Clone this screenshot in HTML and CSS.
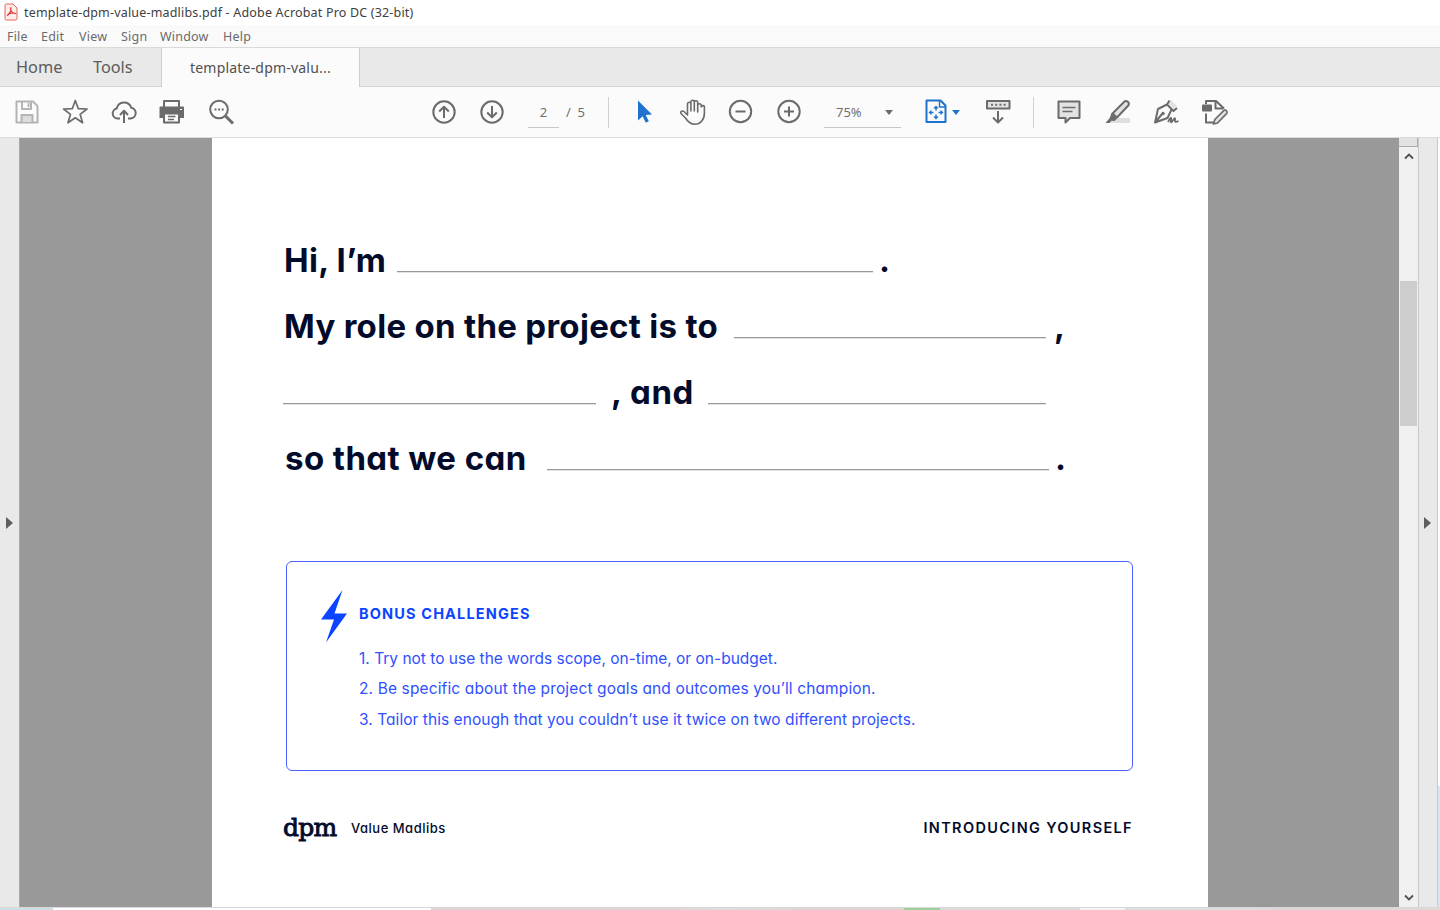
FILE: index.html
```html
<!doctype html>
<html lang="en">
    <head>
        <meta charset="utf-8" />
        <meta name="viewport" content="width=device-width, initial-scale=1" />
        <title>template-dpm-value-madlibs.pdf - Adobe Acrobat Pro DC (32-bit)</title>
        <link rel="stylesheet" href="styles.css">
    </head>
    <body>
        <header class="titlebar">
            <svg class="app-icon" width="14" height="18" viewBox="0 0 14 18">
                <path d="M2.500 1h6.500L13 5v10.500a1.500 1.500 0 0 1-1.500 1.500h-9A1.500 1.500 0 0 1 1 15.500v-13A1.500 1.500 0 0 1 2.500 1z" fill="#fdecea" stroke="#e5645f" />
                <path d="M3 12.500c2.500-1 4.300-4.800 3.800-7.500-1 2 1.500 5.500 4.200 5.400-1.800-1-5.800 0-8 2.100z" fill="none" stroke="#e02f2a" stroke-width="1.200" />
            </svg>
            <span class="title">template-dpm-value-madlibs.pdf - Adobe Acrobat Pro DC (32-bit)</span>
        </header>

        <nav class="menubar">
            <span class="file">File</span>
            <span class="edit">Edit</span>
            <span class="view">View</span>
            <span class="sign">Sign</span>
            <span class="window">Window</span>
            <span class="help">Help</span>
        </nav>

        <div class="tabs">
            <div class="tab home">Home</div>
            <div class="tab tools">Tools</div>
            <div class="tab active">template-dpm-valu...</div>
        </div>

        <div class="toolbar">
            <div class="group group-file">
                <svg class="icon faded" viewBox="0 0 28 28">
                    <path d="M3.500 3.500h16.500l4.500 4.500v16.500h-21z" />
                    <path d="M9 4v7h9V4" />
                    <path d="M14.500 5h2v4h-2z" class="solid" />
                    <path d="M8.500 24v-7h11v7" fill="#dcdcdc" />
                </svg>
                <svg class="icon" viewBox="0 0 28 28">
                    <path d="M14.300 2.500l3 8.200 8.700.3-6.900 5.300 2.500 8.500-7.300-5-7.300 5 2.500-8.500L2.600 11l8.700-.3z" stroke-width="1.700" />
                </svg>
                <svg class="icon" viewBox="0 0 28 28">
                    <path d="M10 20.500H7.500a5 5 0 0 1-.8-9.900 7.500 7.500 0 0 1 14.500-.8 5.400 5.400 0 0 1-.4 10.700H18" />
                    <path d="M14 25V13m-4 4l4-4.200 4 4.200" />
                </svg>
                <svg class="icon" viewBox="0 0 28 28">
                    <path d="M6 9V3h15v6" />
                    <path d="M2.500 8.500h22.500a1 1 0 0 1 1 1V20h-4.500v-4h-16v4h-4V9.500a1 1 0 0 1 1-1z" class="solid" />
                    <path d="M6 15.500h15v9H6z" />
                    <path d="M10 18.500h7.500M10 21.500h6" stroke-width="1.400" />
                    <path d="M22 11.500h2" stroke="#fff" stroke-width="1.200" />
                </svg>
                <svg class="icon" viewBox="0 0 28 28">
                    <circle cx="12" cy="11.500" r="8.800" />
                    <path d="M18.500 18l7.500 7.500" stroke-width="3" />
                    <path d="M7.500 10.500h2v2h-2zM11.100 10.500h2v2h-2zM14.700 10.500h2v2h-2z" class="solid" />
                </svg>
            </div>

            <div class="group group-pages">
                <svg class="icon" viewBox="0 0 28 28">
                    <circle cx="14" cy="14" r="10.700" />
                    <path d="M14 20V9m-4.800 4.500L14 8.700l4.800 4.800" />
                </svg>
                <svg class="icon" viewBox="0 0 28 28">
                    <circle cx="14" cy="14" r="10.700" />
                    <path d="M14 8v11m-4.800-4.500l4.800 4.800 4.800-4.800" />
                </svg>
            </div>
            <div class="page-number">2</div>
            <div class="page-total">/&nbsp; 5</div>

            <div class="group group-view">
                <svg class="icon" viewBox="0 0 28 28">
                    <path d="M7 2.500v20l4.600-4.300 3.200 6.600 3-1.500-3.100-6.300 6.300-.4z" fill="#1f73cc" stroke="none" />
                </svg>
                <svg class="icon" viewBox="0 0 28 28">
                    <path d="M8.500 14.500V6a1.700 1.700 0 0 1 3.400 0v7V4a1.700 1.700 0 0 1 3.400 0v9V4.500a1.700 1.700 0 0 1 3.400 0V14 7.500a1.700 1.700 0 0 1 3.500 0V9a1.600 1.600 0 0 1 3.200.5V15c0 7-4 11.200-9.700 11.200-5 0-7-2.500-9.200-6.200L2 15.500c-1-2.500 1.500-3.200 3.500-1.500l3 3z" stroke-width="1.600" />
                </svg>
                <svg class="icon" viewBox="0 0 28 28">
                    <circle cx="13.500" cy="13.500" r="10.700" />
                    <path d="M8.500 13.500h10" />
                </svg>
                <svg class="icon" viewBox="0 0 28 28">
                    <circle cx="14" cy="13.500" r="10.700" />
                    <path d="M9 13.500h10M14 8.500v10" />
                </svg>
            </div>
            <div class="zoom">75% <i class="caret"></i></div>

            <div class="group group-fit">
                <svg class="icon blue" viewBox="0 0 28 28">
                    <path d="M4.500 2.500h14l5 5V24h-19z" />
                    <path d="M17.500 3v6h6" stroke-width="1.500" />
                    <path d="M14 7.500l-2.800 3h5.600zM14 21.500l-2.800-3h5.600zM6.500 14.500l3-2.800v5.600zM21.500 14.500l-3-2.800v5.600z" class="solid" />
                    <path d="M14 10v2.500m0 4V19M9 14.500h2.500m5 0H19" stroke-width="1.500" />
                </svg>
                <i class="caret blue"></i>
                <svg class="icon scroll" viewBox="0 0 28 28">
                    <path d="M3 3h22.500v7.500H3z" fill="#e4e4e4" />
                    <path d="M7 6.700h15" stroke-dasharray="2 2.200" />
                    <path d="M14 13v11m-5-4.500l5 5 5-5" />
                </svg>
            </div>

            <div class="group group-comment">
                <svg class="icon" viewBox="0 0 28 28">
                    <path d="M3.500 3.500h21v16.500H15l-4.500 4.500V20h-7z" fill="#e2e2e2" />
                    <path d="M7.500 9.500h13M7.500 13.500h10" stroke-width="1.500" />
                </svg>
                <svg class="icon" viewBox="0 0 28 28">
                    <path d="M12 20h14v5H5z" fill="#dedede" stroke="none" />
                    <path d="M8.500 15.500L20.500 3.500c2-1.600 5.500 1.300 4 3.800L13 19.500z" fill="#e2e2e2" />
                    <path d="M7.500 15l5.500 5.500-2.500 2.500-3-.3L5.500 25H1.500l4.200-5z" class="solid" />
                </svg>
                <svg class="icon" viewBox="0 0 28 28">
                    <path d="M15.500 5l3.500-3 6 6-3 3z" fill="#e2e2e2" stroke="none" />
                    <path d="M17.500 2.500l-2.500 4 6.500 6.500L25 10M15 6.500L6 11 3 24.500 15.500 20l4-8.500M3.500 24l6.500-8" />
                    <circle cx="11" cy="15.500" r="1.700" class="solid" />
                    <path d="M16 24c2-4 4-6 3-2s1 2 2.500-.5 2-1 1.500 1 1.500 1.500 3.500.5" stroke-width="1.700" />
                </svg>
                <svg class="icon" viewBox="0 0 28 28">
                    <path d="M5 6V3h10l8 7.500M14.500 3v7.500H22M5 15.500v9h7" />
                    <rect x="1" y="6.500" width="10" height="7" rx="1" class="solid" />
                    <path d="M12.500 26l1.300-4.500L23 12.300c1.500-1 4 1.200 2.800 3L16.500 25z" fill="#e2e2e2" stroke-width="1.700" />
                </svg>
            </div>
        </div>

        <main class="workspace">
            <div class="rail left"><i class="arrow"></i></div>
            <div class="canvas">
                <article class="page">
                    <section class="madlibs">
                        <p><span class="hi">Hi, I’m</span><i class="blank b1"></i><span class="dot">.</span></p>
                        <p><span class="role">My role on the project is to</span><i class="blank b2"></i><span class="comma">,</span></p>
                        <p><i class="blank b3"></i><span class="and">, and</span><i class="blank b4"></i></p>
                        <p><span class="so">so that we can</span><i class="blank b5"></i><span class="dot">.</span></p>
                    </section>

                    <section class="bonus">
                        <svg class="bolt" width="26" height="54" viewBox="0 0 26 54">
                            <path d="M21.500 0L0 29.500h13L5 52.500 26 23.500H13.500z" fill="#0b45ff" />
                        </svg>
                        <div>
                            <h2>BONUS CHALLENGES</h2>
                            <ol>
                                <li class="scope">1. Try not to use the words scope, on-time, or on-budget.</li>
                                <li class="goals">2. Be specific about the project goals and outcomes you’ll champion.</li>
                                <li class="tailor">3. Tailor this enough that you couldn’t use it twice on two different projects.</li>
                            </ol>
                        </div>
                    </section>

                    <footer class="page-footer">
                        <span class="logo">dpm</span>
                        <span class="doc-name">Value Madlibs</span>
                        <span class="section-name">INTRODUCING YOURSELF</span>
                    </footer>
                </article>
            </div>
            <div class="scrollbar">
                <div class="splitter"></div>
                <svg width="10" height="7" viewBox="0 0 10 7"><path d="M1 5.500l4-4 4 4" /></svg>
                <div class="thumb"></div>
                <svg class="down" width="10" height="7" viewBox="0 0 10 7"><path d="M1 1.500l4 4 4-4" /></svg>
            </div>
            <div class="rail right"><i class="arrow"></i></div>
            <div class="edge"></div>
        </main>
        <div class="desktop"></div>
    </body>
</html>
```

FILE: styles.css
```css
* {
    box-sizing: border-box;
}

body {
    margin: 0;
    height: 910px;
    overflow: hidden;
    display: flex;
    flex-direction: column;
    font-family: "Noto Sans", "Open Sans", sans-serif;
    color: #5c5c5c;
    background: #fff;
}

.titlebar {
    height: 25px;
    display: flex;
    align-items: center;
    padding-left: 4px;
    color: #404040;
    font-size: 12.500px;
    letter-spacing: 0.180px;
}

.app-icon {
    margin-top: -2px;
}

.title {
    margin-left: 6px;
    white-space: nowrap;
}

.menubar {
    height: 23px;
    display: flex;
    align-items: center;
    padding-left: 7px;
    background: #fafafa;
    border-bottom: 1px solid #dadada;
    font-size: 12.500px;
    letter-spacing: 0.200px;
    color: #6a6a6a;
}

.file { width: 34px; }
.edit { width: 38px; }
.view { width: 42px; }
.sign { width: 39px; }
.window { width: 63px; }

.tabs {
    height: 39px;
    display: flex;
    background: #e9e9e9;
    border-bottom: 1px solid #d2d2d2;
    font-size: 16.300px;
    line-height: 38px;
}

.home {
    width: 93px;
    padding-left: 16px;
}

.tools {
    width: 68px;
}

.active {
    width: 199px;
    height: 39px;
    padding-left: 28px;
    background: #fbfbfb;
    border-left: 1px solid #cfcfcf;
    border-right: 1px solid #cfcfcf;
    font-size: 14px;
    letter-spacing: 0.200px;
    line-height: 40px;
    color: #505050;
}

.toolbar {
    height: 51px;
    display: flex;
    align-items: center;
    background: #fbfbfb;
    border-bottom: 1px solid #dcdcdc;
    font-size: 13px;
    color: #707070;
}

.group {
    display: flex;
    align-items: center;
    gap: 20.400px;
}

.icon {
    width: 28px;
    height: 28px;
    fill: none;
    stroke: #6b6b6b;
    stroke-width: 2;
    stroke-linejoin: round;
}

.icon .solid {
    fill: #6b6b6b;
    stroke: none;
}

.icon.faded {
    stroke: #b4b4b4;
}

.icon.faded .solid {
    fill: #b4b4b4;
}

.icon.blue {
    stroke: #1f73cc;
}

.icon.blue .solid {
    fill: #1f73cc;
}

.group-file {
    margin-left: 13px;
}

.group-pages {
    margin-left: 195px;
}

.page-number {
    width: 31px;
    height: 31px;
    margin-left: 22px;
    border-bottom: 1px solid #c8c8c8;
    text-align: center;
    line-height: 31px;
}

.page-total {
    width: 50px;
    height: 31px;
    padding-left: 7px;
    border-right: 1px solid #d0d0d0;
    line-height: 31px;
}

.group-view {
    margin-left: 22px;
    gap: 20px;
}

.zoom {
    width: 77px;
    height: 31px;
    margin-left: 21px;
    padding: 0 8px 0 12px;
    display: flex;
    align-items: center;
    justify-content: space-between;
    border-bottom: 1px solid #c8c8c8;
}

.caret {
    margin-top: 1px;
    border: 4px solid transparent;
    border-top: 5px solid #6b6b6b;
    border-bottom: 0;
}

.caret.blue {
    margin-left: 2px;
    border-top-color: #1f73cc;
}

.group-fit {
    margin-left: 21px;
    width: 112px;
    height: 31px;
    gap: 0;
    border-right: 1px solid #d0d0d0;
}

.scroll {
    margin-left: 24px;
}

.group-comment {
    margin-left: 21px;
    gap: 20.600px;
}

.workspace {
    height: 769px;
    display: flex;
}

.rail {
    width: 20px;
    display: flex;
    align-items: center;
    background: #e9e9e9;
    border-right: 1px solid #c9c9c9;
}

.rail.left {
    padding-left: 6px;
    border-right-color: #a8a8a8;
}

.rail.right {
    width: 19px;
    padding-left: 5px;
}

.arrow {
    border: 6px solid transparent;
    border-left: 7px solid #5e5e5e;
    border-right: 0;
}

.canvas {
    width: 1379px;
    padding-left: 192px;
    background: #999;
}

.page {
    width: 996px;
    height: 769px;
    padding: 89px 74px 0 71px;
    background: #fff;
    color: #030b2b;
    font-family: Inter, sans-serif;
    font-feature-settings: "cv11";
}

.madlibs {
    height: 263px;
    font-size: 33px;
    font-weight: 650;
    letter-spacing: 0.300px;
}

.madlibs p {
    height: 66px;
    margin: 0;
    display: flex;
    align-items: baseline;
    line-height: 66px;
    white-space: nowrap;
}

.blank {
    height: 1px;
    background: #999;
    box-shadow: 0 1px #e2e2e2;
}

.hi { width: 114px; padding-left: 1px; }
.b1 { width: 476px; }
.role { width: 451px; padding-left: 1px; }
.b2 { width: 312px; }
.b3 { width: 313px; }
.and { width: 112px; padding-left: 15px; letter-spacing: 0.600px; }
.b4 { width: 338px; }
.so { width: 264px; padding-left: 2px; letter-spacing: 0.420px; }
.b5 { width: 502px; }

.dot {
    padding-left: 6px;
}

.comma {
    padding-left: 8px;
}

.bonus {
    width: 847px;
    height: 210px;
    margin: 71px 0 0 3px;
    padding: 28px 0 0 34px;
    display: flex;
    align-items: flex-start;
    border: 1px solid #4a62ff;
    border-radius: 6px;
    color: #2f50ff;
}

.bonus > div {
    margin-left: 12px;
}

h2 {
    margin: 13px 0 20px;
    color: #0b45ff;
    font-size: 14.500px;
    font-weight: 650;
    line-height: 21px;
    letter-spacing: 1.150px;
}

ol {
    margin: 0;
    padding: 0;
    list-style: none;
    font-size: 15.500px;
    line-height: 30.300px;
    white-space: nowrap;
}

.goals {
    letter-spacing: 0.130px;
}

.tailor {
    letter-spacing: 0.050px;
}

.page-footer {
    height: 30px;
    margin-top: 42px;
    padding-right: 1px;
    display: flex;
    align-items: center;
}

.logo {
    width: 68px;
    font-family: "DejaVu Serif", serif;
    font-size: 25px;
    letter-spacing: -0.800px;
    line-height: 30px;
    -webkit-text-stroke: 0.900px #030b2b;
}

.doc-name {
    font-size: 13px;
    font-weight: 500;
    letter-spacing: 0.500px;
}

.section-name {
    margin: -2px 0 0 auto;
    font-size: 14.500px;
    font-weight: 600;
    letter-spacing: 1.350px;
}

.scrollbar {
    width: 20px;
    display: flex;
    flex-direction: column;
    align-items: center;
    background: #f0f0f0;
    border-right: 1px solid #c9c9c9;
}

.scrollbar svg {
    fill: none;
    stroke: #505050;
    stroke-width: 1.800;
}

.splitter {
    width: 19px;
    height: 9px;
    margin-bottom: 6px;
    background: #e2e2e2;
    border-right: 1px solid #aaa;
    border-bottom: 1px solid #aaa;
}

.thumb {
    width: 17px;
    height: 145px;
    margin-top: 121px;
    background: #cdcdcd;
}

.scrollbar .down {
    margin: auto 0 6px;
}

.edge {
    width: 2px;
    background: linear-gradient(#fff 648px, #d5e7f5 648px);
}

/* sliver of the window behind */
.desktop {
    height: 3px;
    border-top: 1px solid #d8d8d8;
    background: linear-gradient(90deg, #cddde5 53px, #fff 53px 431px, #e0d5d5 431px 680px, #dedede 720px, #e0d5d5 800px 904px, #9fcf9b 904px 940px, #dedada 940px 1080px, #f3f3f3 1080px 1125px, #dcdfe2 1125px 1220px, #e0d8d8 1280px);
}
```
